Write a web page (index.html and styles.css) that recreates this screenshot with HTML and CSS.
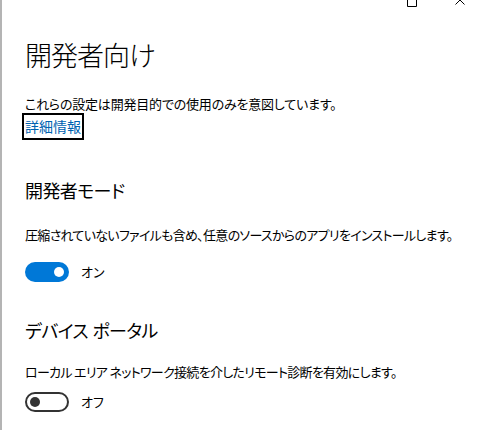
FILE: index.html
```
<!DOCTYPE html>
<html lang="ja">
<head>
<meta charset="utf-8">
<link rel="stylesheet" href="styles.css">
</head>
<body>
<div class="titlebar">
  <svg class="winbtn" width="10" height="8" viewBox="0 0 10 8"><path d="M0.5 -4 V6.5 H9.5 V-4" fill="none" stroke="#000" stroke-width="1"/></svg>
  <svg class="winbtn close" width="10" height="8" viewBox="0 0 10 8"><path d="M0.5 4.5 L5 0 L9.5 4.5" fill="none" stroke="#000" stroke-width="1"/></svg>
</div>
<div class="page">
  <h1 class="title">開発者向け</h1>
  <p class="intro">これらの設定は開発目的での使用のみを意図しています。</p>
  <a class="more" href="#">詳細情報</a>

  <h2 class="section first">開発者モード</h2>
  <p class="desc">圧縮されていないファイルも含め、任意のソースからのアプリをインストールします。</p>
  <div class="toggle_row">
    <span class="toggle on"><span class="knob"></span></span>
    <span class="toggle_label">オン</span>
  </div>

  <h2 class="section">デバイス ポータル</h2>
  <p class="desc tight">ローカル エリア ネットワーク接続を介したリモート診断を有効にします。</p>
  <div class="toggle_row">
    <span class="toggle off"><span class="knob"></span></span>
    <span class="toggle_label">オフ</span>
  </div>
</div>
</body>
</html>
```
FILE: styles.css
```
html, body{
  margin: 0;
  background: #fff;
}

body{
  border-left: 2px solid #b4b4b4;
  height: 430px;
  box-sizing: border-box;
  font-family: "Noto Sans CJK JP", "Noto Sans", sans-serif;
  font-feature-settings: "palt";
  color: #000;
  overflow: hidden;
}

.titlebar{
  height: 8px;
  display: flex;
  justify-content: flex-end;
  align-items: flex-start;
  gap: 38px;
  padding-right: 14px;
}

.winbtn{
  display: block;
}

.page{
  padding-left: 23px;
}

.title{
  margin: 32px 0 0 0;
  font-size: 27px;
  line-height: 30px;
  font-weight: 300;
  letter-spacing: -1px;
}

.intro{
  margin: 25px 0 0 0;
  font-size: 13px;
  line-height: 18px;
  letter-spacing: -0.2px;
}

.more{
  display: inline-block;
  margin: 0 0 0 -3px;
  padding: 2px 1px;
  border: 2px solid #000;
  color: #0063b1;
  text-decoration: none;
  font-size: 14px;
  line-height: 19px;
}

.section{
  margin: 36px 0 0 0;
  font-size: 18px;
  line-height: 24px;
  font-weight: 400;
  letter-spacing: -0.6px;
  word-spacing: 1px;
}

.section.first{
  margin-top: 38px;
}

.desc{
  margin: 24px 0 0 0;
  font-size: 13px;
  line-height: 18px;
  letter-spacing: -0.7px;
  white-space: nowrap;
}

.desc.tight{
  margin-top: 21px;
}

.toggle_row{
  display: flex;
  align-items: center;
  gap: 12px;
  margin-top: 18px;
}

.desc.tight + .toggle_row{
  margin-top: 11px;
}

.toggle{
  width: 44px;
  height: 20px;
  box-sizing: border-box;
  border-radius: 10px;
  display: flex;
  align-items: center;
  padding: 0 5px;
}

.toggle.on{
  background: #0078d7;
  justify-content: flex-end;
}

.toggle.off{
  border: 2px solid #333;
  justify-content: flex-start;
  padding: 0 3px;
}

.knob{
  width: 10px;
  height: 10px;
  border-radius: 50%;
}

.toggle.on .knob{
  background: #fff;
}

.toggle.off .knob{
  background: #333;
}

.toggle_label{
  font-size: 13px;
  line-height: 18px;
}
```
